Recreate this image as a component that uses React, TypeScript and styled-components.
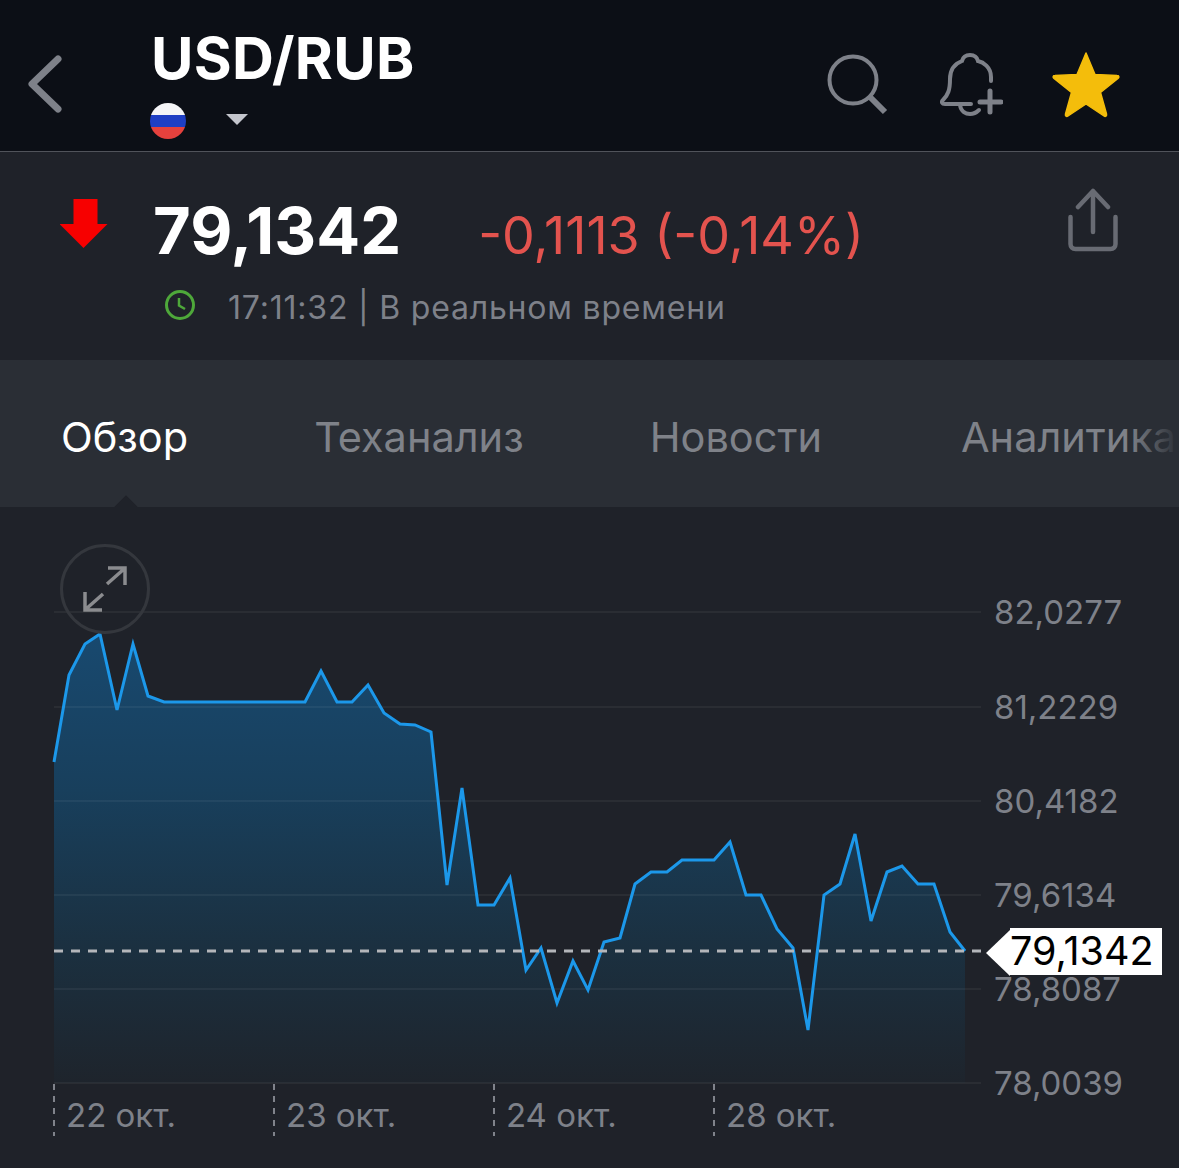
import styled, { createGlobalStyle } from "styled-components";

const GlobalStyle = createGlobalStyle`
  html, body { margin: 0; padding: 0; background: #1f2229; }
  body { font-family: Inter, "Noto Sans", sans-serif; width: 1179px; height: 1168px; overflow: hidden; }
`;

const linePoints = [
  [54, 762], [69, 675], [85, 644], [100, 634], [117, 710], [133, 644], [148, 696], [164, 702], [305, 702], [321, 671],
  [337, 702], [352, 702], [368, 685], [384, 713], [400, 724], [415, 725], [431, 732], [447, 885], [462, 788], [478, 905],
  [494, 905], [510, 878], [526, 970], [541, 948], [557, 1003], [573, 961], [588, 990], [604, 942], [620, 938], [635, 884],
  [651, 872], [667, 872], [682, 860], [714, 860], [730, 842], [746, 895], [761, 895], [777, 929], [793, 948], [808, 1030],
  [824, 895], [840, 884], [855, 834], [871, 921], [887, 872], [902, 866], [918, 884], [934, 884], [950, 932], [965, 951],
];

const TOP = 507;
const toPath = linePoints.map(([x, y]) => `${x},${y - TOP}`).join(" ");
const areaPath = `54,${1083 - TOP} ${toPath} 965,${1083 - TOP}`;

const grid = [
  { y: 612, label: "82,0277" },
  { y: 707, label: "81,2229" },
  { y: 801, label: "80,4182" },
  { y: 895, label: "79,6134" },
  { y: 989, label: "78,8087" },
  { y: 1083, label: "78,0039" },
];

const dates = [
  { x: 54, label: "22 окт." },
  { x: 274, label: "23 окт." },
  { x: 494, label: "24 окт." },
  { x: 714, label: "28 окт." },
];

const App = () => (
  <Page>
    <GlobalStyle />
    <Header>
      <BackIcon viewBox="0 0 34 58" fill="none">
        <path d="M30 4 4 29l26 25" stroke="#7e8189" strokeWidth="7" strokeLinecap="round" strokeLinejoin="round" />
      </BackIcon>
      <TitleBlock>
        <Title>USD/RUB</Title>
        <FlagRow>
          <Flag viewBox="0 0 36 36">
            <defs>
              <clipPath id="flagClip"><circle cx="18" cy="18" r="18" /></clipPath>
            </defs>
            <g clipPath="url(#flagClip)">
              <rect width="36" height="12" fill="#f5f5f7" />
              <rect y="12" width="36" height="12" fill="#1f3fc4" />
              <rect y="24" width="36" height="12" fill="#e5413d" />
            </g>
          </Flag>
          <Caret />
        </FlagRow>
      </TitleBlock>
      <HeaderIcons>
        <SearchIcon viewBox="0 0 62 62" fill="none">
          <circle cx="26" cy="26" r="23.5" stroke="#7e8189" strokeWidth="4" />
          <path d="M43 43 58 58" stroke="#7e8189" strokeWidth="6" />
        </SearchIcon>
        <BellIcon viewBox="0 0 64 64" fill="none" stroke="#7e8189" strokeWidth="4" strokeLinecap="round">
          <path d="M52 29V25C52 15 44 10 39 9C38 5 35 3 31 3C27 3 24 5 23 9C15 12 11 18 11 27C11 38 9 43 4 48C2 50 3 52 6 52H32" />
          <path d="M21 53C22 60 27 62 31 62C35 62 37 61 40 58" />
          <path d="M41 50H62M51 39V60" strokeWidth="5" />
        </BellIcon>
        <StarIcon viewBox="0 0 68 68">
          <path
            d="M34 2 43 23.5 65 24.5C67 24.5 67.5 26 66 27.5L48.5 41.5 54.5 63C55 65 53.5 66 52 65L34 53 16 65C14.500 66 13 65 13.500 63L19.500 41.500 2 27.500C.5 26 1 24.500 3 24.500L25 23.500Z"
            fill="#f4bd0b"
            stroke="#f4bd0b"
            strokeWidth="1.500"
            strokeLinejoin="round"
          />
        </StarIcon>
      </HeaderIcons>
    </Header>

    <Quote>
      <QuoteMain>
        <DownArrow viewBox="0 0 48 50">
          <path d="M14 0H38V25H48L24 49 0 25H14Z" fill="#f70000" transform="translate(-.5 0)" />
        </DownArrow>
        <QuoteText>
          <PriceRow>
            <Price>79,1342</Price>
            <Change>-0,1113 (-0,14%)</Change>
          </PriceRow>
          <StatusRow>
            <ClockIcon viewBox="0 0 32 32" fill="none">
              <circle cx="16" cy="16" r="13.500" stroke="#4ea83a" strokeWidth="3" />
              <path d="M15 9V16.500L21 20" stroke="#4ea83a" strokeWidth="2.500" />
            </ClockIcon>
            <StatusText>17:11:32 | В реальном времени</StatusText>
          </StatusRow>
        </QuoteText>
      </QuoteMain>
      <ShareIcon viewBox="0 0 50 64" fill="none" stroke="#686b73" strokeWidth="4.500" strokeLinecap="round" strokeLinejoin="round">
        <path d="M2.500 29V56C2.500 59 4.500 61 7.500 61H42.500C45.500 61 47.500 59 47.500 56V29" />
        <path d="M25 44V3M10 19 25 3 40 19" />
      </ShareIcon>
    </Quote>

    <Tabs>
      <Tab $active>Обзор</Tab>
      <Tab>Теханализ</Tab>
      <Tab>Новости</Tab>
      <Tab $extra={13}>Аналитика</Tab>
      <TabFade />
      <Notch />
    </Tabs>

    <ChartArea>
      <ChartSvg viewBox={`0 0 1179 ${1168 - TOP}`}>
        <defs>
          <linearGradient id="areaFill" x1="0" y1="0" x2="0" y2="1">
            <stop offset="0" stopColor="#18496f" />
            <stop offset="0.35" stopColor="#183f5c" />
            <stop offset="0.7" stopColor="#1b3040" />
            <stop offset="1" stopColor="#1e242c" />
          </linearGradient>
        </defs>
        <polygon points={areaPath} fill="url(#areaFill)" />
        {grid.map((g) => (
          <line key={g.y} x1="54" x2="981" y1={g.y - TOP} y2={g.y - TOP} stroke="#ffffff" strokeOpacity="0.05" strokeWidth="2" />
        ))}
        <polyline points={toPath} fill="none" stroke="#1c98ea" strokeWidth="3" strokeLinejoin="miter" />
        <line x1="54" x2="985" y1={951 - TOP} y2={951 - TOP} stroke="#b4b6ba" strokeWidth="3" strokeDasharray="9 8" />
        {grid.map((g) => (
          <AxisLabel key={g.label} x="994" y={g.y - TOP + 12}>{g.label}</AxisLabel>
        ))}
        {dates.map((d) => (
          <g key={d.label}>
            <line x1={d.x} x2={d.x} y1={1084 - TOP} y2={1136 - TOP} stroke="#80838b" strokeWidth="2" strokeDasharray="6 6" />
            <AxisLabel x={d.x + 12} y={1127 - TOP}>{d.label}</AxisLabel>
          </g>
        ))}
      </ChartSvg>
      <ExpandButton>
        <svg width="46" height="46" viewBox="0 0 46 46" fill="none" stroke="#8b8c8f" strokeWidth="3.500">
          <path d="M25 18 42 3M26 2H43V19" />
          <path d="M21 28 4 43M3 26V44H20" />
        </svg>
      </ExpandButton>
      <PriceTag>79,1342</PriceTag>
    </ChartArea>
  </Page>
);

export default App;

const Page = styled.div`
  width: 1179px;
  height: 1168px;
  display: flex;
  flex-direction: column;
  overflow: hidden;
  background: #1f2229;
`;

const Header = styled.header`
  height: 151px;
  flex: none;
  box-sizing: content-box;
  border-bottom: 1px solid #50535a;
  background: #0c0f16;
  display: flex;
  align-items: flex-start;
  padding-left: 28px;
  padding-right: 59px;
`;

const BackIcon = styled.svg`
  width: 34px;
  height: 58px;
  margin-top: 55px;
  flex: none;
`;

const TitleBlock = styled.div`
  margin-left: 88px;
  display: flex;
  flex-direction: column;
  flex: 1;
`;

const Title = styled.div`
  margin: 23px 0 0 1px;
  font-size: 58px;
  line-height: 70px;
  font-weight: 700;
  color: #fff;
  letter-spacing: 0.3px;
`;

const FlagRow = styled.div`
  display: flex;
  align-items: center;
  margin-top: 10px;
`;

const Flag = styled.svg`
  width: 36px;
  height: 36px;
`;

const Caret = styled.div`
  margin: 0 0 4px 40px;
  width: 0;
  height: 0;
  border-left: 11px solid transparent;
  border-right: 11px solid transparent;
  border-top: 11px solid #c4c6cd;
`;

const HeaderIcons = styled.div`
  display: flex;
  align-items: flex-start;
`;

const SearchIcon = styled.svg`
  width: 62px;
  height: 62px;
  margin-top: 54px;
`;

const BellIcon = styled.svg`
  width: 64px;
  height: 64px;
  margin: 52px 0 0 50px;
`;

const StarIcon = styled.svg`
  width: 68px;
  height: 68px;
  margin: 51px 0 0 49px;
`;

const Quote = styled.section`
  height: 208px;
  flex: none;
  background: #1f2229;
  display: flex;
  justify-content: space-between;
  align-items: flex-start;
  padding: 0 61px 0 60px;
`;

const QuoteMain = styled.div`
  display: flex;
  align-items: flex-start;
`;

const DownArrow = styled.svg`
  width: 48px;
  height: 50px;
  margin-top: 47px;
  flex: none;
`;

const QuoteText = styled.div`
  margin-left: 45px;
  display: flex;
  flex-direction: column;
`;

const PriceRow = styled.div`
  display: flex;
  align-items: baseline;
  margin-top: 42px;
`;

const Price = styled.div`
  font-size: 65px;
  line-height: 74px;
  font-weight: 700;
  color: #fff;
`;

const Change = styled.div`
  margin-left: 77px;
  font-size: 52px;
  line-height: 74px;
  font-weight: 400;
  color: #e3534e;
`;

const StatusRow = styled.div`
  display: flex;
  align-items: center;
  margin-top: 15px;
`;

const ClockIcon = styled.svg`
  width: 32px;
  height: 32px;
  margin-left: 11px;
  margin-top: -6px;
`;

const StatusText = styled.div`
  margin-left: 32px;
  font-size: 32px;
  line-height: 40px;
  color: #7e8189;
  letter-spacing: 0.8px;
`;

const ShareIcon = styled.svg`
  width: 50px;
  height: 64px;
  margin-top: 36px;
  margin-left: -1px;
`;

const Tabs = styled.nav`
  position: relative;
  height: 147px;
  flex: none;
  background: #2a2e35;
  display: flex;
  align-items: center;
  padding: 6px 0 0 61px;
  box-sizing: border-box;
  gap: 126px;
  overflow: hidden;
  white-space: nowrap;
`;

const Tab = styled.div<{ $active?: boolean; $extra?: number }>`
  font-size: 41.5px;
  line-height: 50px;
  font-weight: 400;
  margin-left: ${({ $extra }) => $extra ?? 0}px;
  color: ${({ $active }) => ($active ? "#fff" : "#7f8289")};
  flex: none;
`;

const TabFade = styled.div`
  position: absolute;
  top: 0;
  right: 0;
  width: 50px;
  height: 100%;
  background: linear-gradient(to right, rgba(42, 46, 53, 0), #2a2e35);
`;

const Notch = styled.div`
  position: absolute;
  left: 126px;
  bottom: -10px;
  width: 18px;
  height: 18px;
  margin-left: -9px;
  background: #1f2229;
  transform: rotate(45deg);
`;

const ChartArea = styled.section`
  position: relative;
  flex: 1;
  background: #1f2229;
`;

const ChartSvg = styled.svg`
  display: block;
  width: 1179px;
  height: 661px;
`;

const AxisLabel = styled.text`
  font-family: Inter, "Noto Sans", sans-serif;
  font-size: 33px;
  fill: #7e8189;
`;

const ExpandButton = styled.div`
  position: absolute;
  left: 60px;
  top: 37px;
  width: 90px;
  height: 90px;
  box-sizing: border-box;
  border: 3px solid #34373d;
  border-radius: 50%;
  display: flex;
  align-items: center;
  justify-content: center;
`;

const PriceTag = styled.div`
  position: absolute;
  left: 1010px;
  top: 421px;
  width: 152px;
  height: 47px;
  background: #fff;
  color: #000;
  font-size: 39.5px;
  line-height: 47px;
  &::before {
    content: "";
    position: absolute;
    left: -24px;
    top: 2px;
    width: 0;
    height: 0;
    border-top: 23px solid transparent;
    border-bottom: 23px solid transparent;
    border-right: 24px solid #fff;
  }
`;
